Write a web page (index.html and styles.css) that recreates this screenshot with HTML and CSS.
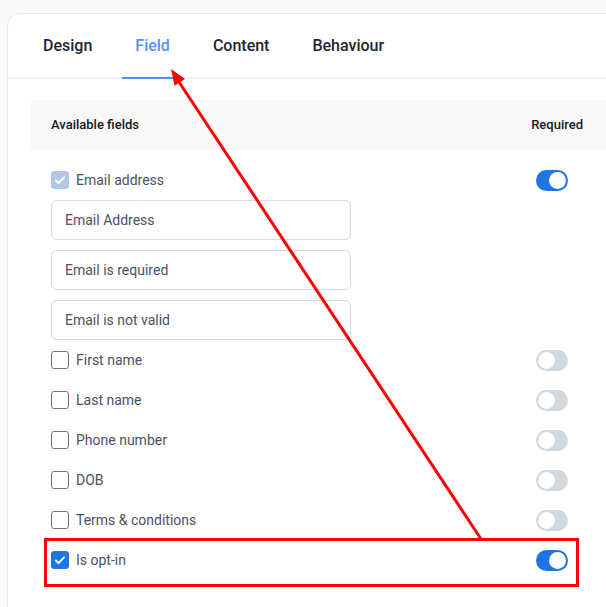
FILE: index.html
```html
<!DOCTYPE html>
<html lang="en">
<head>
<meta charset="utf-8">
<title>Field settings</title>
<link rel="stylesheet" href="styles.css">
</head>
<body>
<div class="page">
  <div class="card">
    <nav class="tabs">
      <div class="tab">Design</div>
      <div class="tab active">Field</div>
      <div class="tab">Content</div>
      <div class="tab">Behaviour</div>
    </nav>
    <div class="panel">
      <div class="fields-head">
        <span>Available fields</span>
        <span>Required</span>
      </div>
      <div class="field-list">
        <div class="field-row">
          <label class="field-label"><span class="cb cb-disabled"><svg viewBox="0 0 18 18"><polyline points="4.5,9.5 7.5,12.5 13.5,6"/></svg></span>Email address</label>
          <span class="toggle on"></span>
        </div>
        <div class="messages">
          <div class="text-input">Email Address</div>
          <div class="text-input">Email is required</div>
          <div class="text-input">Email is not valid</div>
        </div>
        <div class="field-row">
          <label class="field-label"><span class="cb"></span>First name</label>
          <span class="toggle"></span>
        </div>
        <div class="field-row">
          <label class="field-label"><span class="cb"></span>Last name</label>
          <span class="toggle"></span>
        </div>
        <div class="field-row">
          <label class="field-label"><span class="cb"></span>Phone number</label>
          <span class="toggle"></span>
        </div>
        <div class="field-row">
          <label class="field-label"><span class="cb"></span>DOB</label>
          <span class="toggle"></span>
        </div>
        <div class="field-row">
          <label class="field-label"><span class="cb"></span>Terms &amp; conditions</label>
          <span class="toggle"></span>
        </div>
        <div class="field-row">
          <label class="field-label"><span class="cb cb-checked"><svg viewBox="0 0 18 18"><polyline points="4.5,9.5 7.5,12.5 13.5,6"/></svg></span>Is opt-in</label>
          <span class="toggle on"></span>
        </div>
      </div>
    </div>
  </div>
  <div class="annot-box"></div>
  <svg class="annot-arrow" viewBox="0 0 606 607" width="606" height="607">
    <line x1="481" y1="539" x2="179" y2="82" />
    <polygon points="171,69 174.6,85.8 185,79" />
  </svg>
</div>
</body>
</html>
```
FILE: styles.css
```css
* { box-sizing: border-box; }
html, body {
  margin: 0;
  padding: 0;
}
body {
  background: #f8f9fb;
  font-family: Roboto, "Liberation Sans", Arial, sans-serif;
  overflow: hidden;
}
.page {
  position: relative;
  width: 606px;
  height: 607px;
  overflow: hidden;
}
.card {
  margin: 13px 0 0 7px;
  width: 640px;
  height: 640px;
  background: #fff;
  border: 1px solid #e8eaee;
  border-radius: 12px;
}
.tabs {
  display: flex;
  gap: 17px;
  height: 65px;
  padding-left: 22px;
  border-bottom: 2px solid #ebf1fa;
}
.tab {
  display: flex;
  align-items: center;
  padding: 0 13px 1px;
  font-size: 16px;
  font-weight: 500;
  color: #1f2430;
}
.tab.active {
  color: #5b8ef5;
  border-bottom: 2px solid #4f8ef7;
  margin-bottom: -2px;
  padding-top: 1px;
}
.panel {
  padding: 21px 22px 0 23px;
}
.fields-head {
  height: 50px;
  background: #f8f8f8;
  display: flex;
  align-items: center;
  justify-content: space-between;
  padding: 0 41px 1px 20px;
  font-size: 13px;
  font-weight: 500;
  color: #15181d;
}
.field-list {
  padding-top: 10px;
}
.field-row {
  height: 40px;
  display: flex;
  align-items: center;
  justify-content: space-between;
  padding: 0 56px 0 20px;
}
.field-label {
  display: flex;
  align-items: center;
  gap: 7px;
  font-size: 14px;
  color: #4a5263;
}
.cb {
  width: 18px;
  height: 18px;
  border: 1px solid #70757f;
  border-radius: 3px;
  display: inline-flex;
  align-items: center;
  justify-content: center;
}
.cb svg {
  width: 18px;
  height: 18px;
}
.cb svg polyline {
  fill: none;
  stroke: #fff;
  stroke-width: 2.2;
  stroke-linecap: round;
  stroke-linejoin: round;
}
.cb-disabled {
  background: #b4c8e5;
  border-color: #b4c8e5;
}
.cb-checked {
  background: #1f74e6;
  border-color: #1f74e6;
}
.messages {
  display: flex;
  flex-direction: column;
  gap: 10px;
  padding-left: 20px;
}
.text-input {
  width: 300px;
  height: 40px;
  border: 1px solid #d8dadd;
  border-radius: 6px;
  display: flex;
  align-items: center;
  padding-left: 13px;
  font-size: 14px;
  color: #4a5263;
}
.toggle {
  position: relative;
  width: 32px;
  height: 21px;
  border-radius: 11px;
  background: #cfd8e1;
}
.toggle::after {
  content: "";
  position: absolute;
  top: 2px;
  left: 2px;
  width: 17px;
  height: 17px;
  border-radius: 50%;
  background: #fff;
}
.toggle.on {
  background: #1f74e6;
}
.toggle.on::after {
  left: 13px;
}
.annot-box {
  position: absolute;
  left: 44px;
  top: 538px;
  width: 535px;
  height: 49px;
  border: 3px solid #ff0000;
}
.annot-arrow {
  position: absolute;
  left: 0;
  top: 0;
  pointer-events: none;
}
.annot-arrow line {
  stroke: #ff0000;
  stroke-width: 3;
}
.annot-arrow polygon {
  fill: #ff0000;
}
```
